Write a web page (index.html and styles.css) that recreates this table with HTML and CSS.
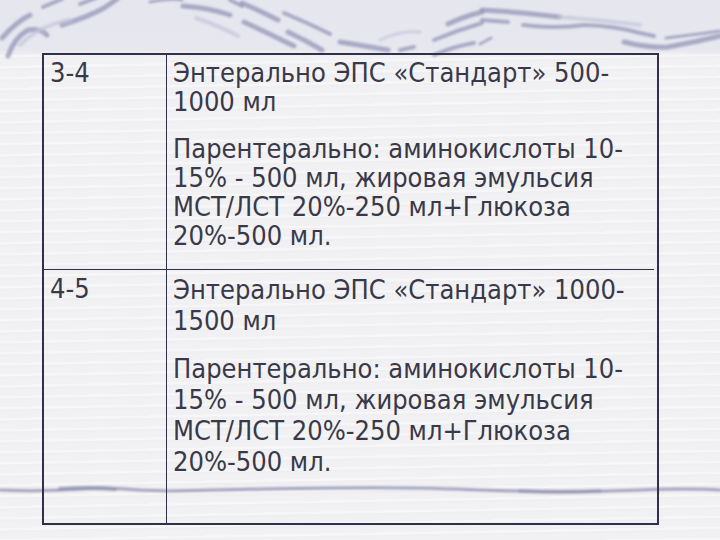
FILE: index.html
```html
<!DOCTYPE html>
<html lang="ru">
<head>
<meta charset="utf-8">
<link rel="stylesheet" href="styles.css">
</head>
<body>
<div class="slide">
  <svg class="deco" width="720" height="540" viewBox="0 0 720 540" aria-hidden="true">
    <defs>
      <filter id="soft" x="-10%" y="-50%" width="120%" height="200%">
        <feGaussianBlur stdDeviation="0.8"/>
      </filter>
    </defs>
    <g fill="none" stroke-linecap="round" filter="url(#soft)">
      <g stroke="#8e8eb2" stroke-opacity="0.68">
        <path d="M2 38 Q16 22 30 15" stroke-width="5"/>
        <path d="M8 56 Q14 38 28 30 Q40 28 47 35" stroke-width="5"/>
        <path d="M62 25 Q90 16 104 8 Q112 3 118 -2" stroke-width="5"/>
        <path d="M43 7 L62 -1" stroke-width="4"/>
        <path d="M80 4 L96 -2" stroke-width="4"/>
        <path d="M183 6 Q210 8 230 15" stroke-width="5"/>
        <path d="M230 0 L242 6" stroke-width="4"/>
        <path d="M242 3 Q262 12 278 20" stroke-width="5"/>
        <path d="M244 22 Q270 34 294 46" stroke-width="5"/>
        <path d="M284 13 Q310 24 330 34" stroke-width="4"/>
        <path d="M288 32 Q305 40 322 50" stroke-width="5"/>
        <path d="M340 42 Q365 46 388 50" stroke-width="5"/>
        <path d="M400 50 L414 47" stroke-width="4"/>
        <path d="M448 24 Q465 16 482 12" stroke-width="5"/>
        <path d="M434 40 Q458 30 482 23" stroke-width="4"/>
        <path d="M434 55 Q455 46 474 43" stroke-width="4"/>
        <path d="M482 10 Q520 12 560 17" stroke-width="5"/>
        <path d="M482 20 L508 22" stroke-width="4"/>
        <path d="M523 25 Q555 29 585 25 Q615 26 640 33 L654 36" stroke-width="4"/>
        <path d="M624 42 Q648 48 668 47 Q695 42 720 36" stroke-width="5"/>
        <path d="M666 38 Q692 35 720 31" stroke-width="3"/>
        <path d="M480 44 L491 38" stroke-width="3"/>
        <path d="M150 2 Q170 -2 182 0" stroke-width="3"/>
      </g>
      <g stroke="#c4c4da" stroke-opacity="0.7">
        <path d="M20 45 Q40 25 70 20" stroke-width="4"/>
        <path d="M560 17 Q600 20 640 25" stroke-width="4"/>
        <path d="M196 18 Q220 26 238 36" stroke-width="4"/>
        <path d="M380 40 Q400 30 420 32" stroke-width="3"/>
      </g>
      <g stroke="#9494b4" stroke-opacity="0.85">
        <path d="M0 490 Q40 492 80 489 Q110 487 140 490 L170 491 Q250 489 330 488 Q420 487 480 490 Q560 493 640 490 Q690 488 720 490" stroke-width="3"/>
        <path d="M60 489 Q90 487 115 489" stroke-width="4"/>
        <path d="M520 491 Q560 493 600 491" stroke-width="3.5"/>
      </g>
    </g>
  </svg>
  <div class="table">
    <div class="cell num r1">3-4</div>
    <div class="cell txt r1">
      <p>Энтерально ЭПС «Стандарт» 500-<br>1000 мл</p>
      <p>Парентерально: аминокислоты 10-<br>15% - 500 мл, жировая эмульсия<br>МСТ/ЛСТ 20%-250 мл+Глюкоза<br>20%-500 мл.</p>
    </div>
    <div class="cell num r2">4-5</div>
    <div class="cell txt r2">
      <p>Энтерально ЭПС «Стандарт» 1000-<br>1500 мл</p>
      <p>Парентерально: аминокислоты 10-<br>15% - 500 мл, жировая эмульсия<br>МСТ/ЛСТ 20%-250 мл+Глюкоза<br>20%-500 мл.</p>
    </div>
  </div>
</div>
</body>
</html>
```

FILE: styles.css
```css
html, body {
  margin: 0;
  padding: 0;
}
body {
  width: 720px;
  height: 540px;
  overflow: hidden;
}
.slide {
  position: relative;
  width: 720px;
  height: 540px;
  overflow: hidden;
  background-color: #f1f1f3;
  background-image:
    linear-gradient(to bottom, #e6e6ef 0, #e7e7ef 50px, rgba(241,241,243,0) 56px),
    repeating-linear-gradient(179deg, rgba(255,255,255,0.35) 0 2px, rgba(230,230,235,0.18) 3px 4px, rgba(255,255,255,0) 5px 11px);
  padding: 53px 0 0 42px;
  box-sizing: border-box;
  font-family: "DejaVu Sans Condensed", "DejaVu Sans", sans-serif;
  color: #393949;
}
.deco {
  position: absolute;
  left: 0;
  top: 0;
}
.table {
  position: relative;
  display: grid;
  grid-template-columns: 123px 487px;
  grid-template-rows: 215px 253px;
  width: 613px;
  border: 2px solid #30304a;
  box-sizing: content-box;
}
.cell {
  font-size: 27px;
  line-height: 29px;
}
.num {
  padding: 3px 0 0 6px;
  border-right: 1.5px solid #30304a;
}
.txt {
  padding: 3px 0 0 6px;
  white-space: nowrap;
}
.r1 {
  border-bottom: 1.5px solid #30304a;
}
.r2 {
  padding-top: 4px;
}
.txt.r2 {
  line-height: 31px;
}
.txt p {
  margin: 0 0 18px 0;
}
.txt.r2 p {
  margin-bottom: 17px;
}
```
